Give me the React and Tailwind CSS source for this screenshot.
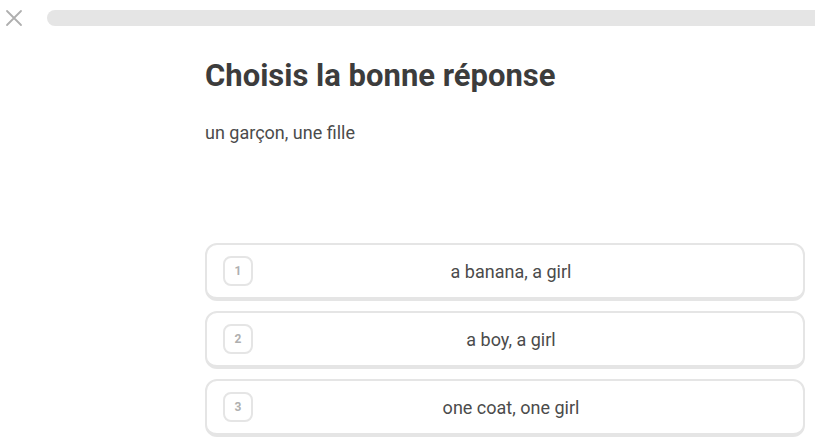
const options = [
  { n: 1, text: "a banana, a girl" },
  { n: 2, text: "a boy, a girl" },
  { n: 3, text: "one coat, one girl" },
];

function CloseIcon() {
  return (
    <svg width="18" height="18" viewBox="0 0 18 18" fill="none">
      <path d="M2 2L16 16M16 2L2 16" stroke="#afafaf" strokeWidth="1.8" strokeLinecap="round" />
    </svg>
  );
}

export default function App() {
  return (
    <div
      className="w-[815px] h-[448px] bg-white overflow-hidden"
      style={{ fontFamily: "Roboto, 'Liberation Sans', sans-serif" }}
    >
      <div className="flex items-center h-[36px] pl-[5px]">
        <button className="w-[18px] h-[18px] flex items-center justify-center">
          <CloseIcon />
        </button>
        <div className="ml-[24px] flex-1 h-[16px] bg-[#e5e5e5] rounded-l-full mr-[-20px]" />
      </div>

      <div className="ml-[205px] w-[600px]">
        <h1 className="mt-[20px] text-[31px] leading-[40px] font-bold text-[#3c3c3c]">
          Choisis la bonne réponse
        </h1>
        <p className="mt-[25px] text-[18px] leading-[24px] text-[#4b4b4b]">
          un garçon, une fille
        </p>

        <div className="mt-[98px] flex flex-col gap-[10px]">
          {options.map((o) => (
            <div
              key={o.n}
              className="flex items-center h-[58px] px-[16px] border-2 border-b-4 border-[#e5e5e5] rounded-[12px]"
            >
              <span className="w-[30px] h-[30px] flex items-center justify-center border-2 border-[#e5e5e5] rounded-[8px] text-[12px] font-bold text-[#afafaf]">
                {o.n}
              </span>
              <span className="flex-1 text-center text-[18px] text-[#4b4b4b]">{o.text}</span>
              <span className="w-[18px]" />
            </div>
          ))}
        </div>
      </div>
    </div>
  );
}
